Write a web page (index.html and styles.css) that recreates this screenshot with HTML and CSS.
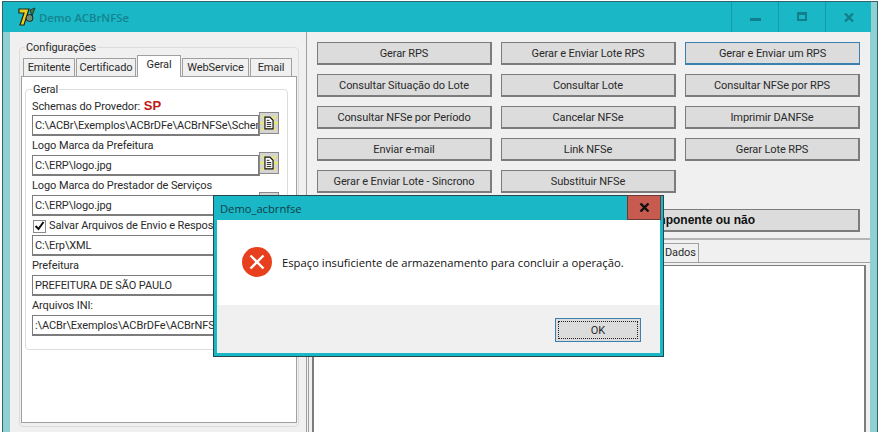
FILE: index.html
```html
<!DOCTYPE html>
<html lang="pt">
<head>
<meta charset="utf-8">
<title>Demo ACBrNFSe</title>
<link rel="stylesheet" href="styles.css">
</head>
<body>
<svg class="defs" width="0" height="0" aria-hidden="true">
  <symbol id="doc" viewBox="0 0 20 22">
    <circle cx="10" cy="11" r="8" fill="#dfe0ac" opacity=".8"/>
    <path d="M2 3l4 3M18 3l-4 3M0 11h4M16 11h4M2 19l4-3M18 19l-4-3" stroke="#f2f04a" stroke-width="1.600"/>
    <path d="M5.500 4.500h5.500l3.500 3.500v9.500h-9z" fill="#fff" stroke="#111" stroke-width="1.300"/>
    <path d="M7.500 8h3M7.500 10.500h5M7.500 12.500h5M7.500 15h5" stroke="#111"/>
  </symbol>
</svg>

<main class="window">
  <header class="titlebar">
    <svg class="logo" width="20" height="20" viewBox="0 0 20 20">
      <path d="M2 2h10l-5 16H3l4-12H2z" fill="#e8d21a" stroke="#222" stroke-width="1.200"/>
      <path d="M13 3l5-2-3 8z" fill="#3e7d3a" stroke="#222" stroke-width=".8"/>
      <circle cx="12.500" cy="11" r="3.500" fill="#6f8f72" stroke="#222"/>
    </svg>
    <span class="title">Demo ACBrNFSe</span>
    <div class="controls">
      <div class="ctl"><span class="min"></span></div>
      <div class="ctl"><span class="max"></span></div>
      <div class="ctl ctl-x">
        <svg width="10" height="9" viewBox="0 0 10 9"><path d="M1 0.500l8 8M9 0.500l-8 8" stroke="#127f8c" stroke-width="2.400"/></svg>
      </div>
    </div>
  </header>

  <div class="client">
    <aside class="left">
      <section class="config">
        <span class="legend">Configurações</span>
        <nav class="tabs">
          <span class="tab t1">Emitente</span>
          <span class="tab t2">Certificado</span>
          <span class="tab active">Geral</span>
          <span class="tab t4">WebService</span>
          <span class="tab t5">Email</span>
        </nav>
        <div class="page">
          <section class="group">
            <span class="legend legend-g">Geral</span>
            <div class="fld"><span class="lbl">Schemas do Provedor: <b class="uf">SP</b></span>
              <div class="line"><span class="inp">C:\ACBr\Exemplos\ACBrDFe\ACBrNFSe\Schemas</span><span class="pick"><svg width="20" height="22"><use href="#doc"/></svg></span></div></div>
            <div class="fld"><span class="lbl">Logo Marca da Prefeitura</span>
              <div class="line"><span class="inp">C:\ERP\logo.jpg</span><span class="pick"><svg width="20" height="22"><use href="#doc"/></svg></span></div></div>
            <div class="fld"><span class="lbl">Logo Marca do Prestador de Serviços</span>
              <div class="line"><span class="inp">C:\ERP\logo.jpg</span><span class="pick"><svg width="20" height="22"><use href="#doc"/></svg></span></div></div>
            <div class="fld"><span class="lbl chk"><span class="box"><svg width="11" height="10" viewBox="0 0 11 10"><path d="M1.500 5l3 3 5-7" fill="none" stroke="#111" stroke-width="2"/></svg></span>Salvar Arquivos de Envio e Resposta</span>
              <div class="line"><span class="inp">C:\Erp\XML</span></div></div>
            <div class="fld"><span class="lbl">Prefeitura</span>
              <div class="line"><span class="inp">PREFEITURA DE SÃO PAULO</span></div></div>
            <div class="fld"><span class="lbl">Arquivos INI:</span>
              <div class="line"><span class="inp">:\ACBr\Exemplos\ACBrDFe\ACBrNFSe\ArqINI</span></div></div>
          </section>
        </div>
      </section>
    </aside>

    <div class="right">
      <section class="actions">
        <div class="grid">
          <button class="btn">Gerar RPS</button>
          <button class="btn">Gerar e Enviar Lote RPS</button>
          <button class="btn btn-focus">Gerar e Enviar um RPS</button>
          <button class="btn">Consultar Situação do Lote</button>
          <button class="btn">Consultar Lote</button>
          <button class="btn">Consultar NFSe por RPS</button>
          <button class="btn">Consultar NFSe por Período</button>
          <button class="btn">Cancelar NFSe</button>
          <button class="btn">Imprimir DANFSe</button>
          <button class="btn">Enviar e-mail</button>
          <button class="btn">Link NFSe</button>
          <button class="btn">Gerar Lote RPS</button>
          <button class="btn">Gerar e Enviar Lote - Sincrono</button>
          <button class="btn">Substituir NFSe</button>
        </div>
        <button class="btn btn-wide">componente ou não</button>
      </section>
      <section class="log">
        <nav class="logtabs"><span class="logtab">Dados</span></nav>
        <div class="logpage"><div class="memo"></div></div>
      </section>
    </div>
  </div>
</main>

<div class="dialog" role="alertdialog">
  <header class="dlg-title">
    <span>Demo_acbrnfse</span>
    <span class="dlg-close"><svg width="11" height="9" viewBox="0 0 11 9"><path d="M1.500 0.500l8 8M9.500 0.500l-8 8" stroke="#111" stroke-width="2.400"/></svg></span>
  </header>
  <div class="dlg-body">
    <svg width="30" height="30" viewBox="0 0 30 30"><circle cx="15" cy="15" r="15" fill="#e8401f"/><path d="M8.500 8.500l13 13M21.500 8.500l-13 13" stroke="#fff" stroke-width="2.400"/></svg>
    <p class="dlg-msg">Espaço insuficiente de armazenamento para concluir a operação.</p>
  </div>
  <footer class="dlg-foot"><button class="ok"><span>OK</span></button></footer>
</div>
</body>
</html>
```

FILE: styles.css
```css
* { box-sizing: border-box; }
html, body { margin: 0; height: 100%; overflow: hidden; }
body { background: #fff; font-family: Roboto, "Liberation Sans", Arial, sans-serif; font-size: 11px; letter-spacing: -.1px; color: #2a2a2a; position: relative; }
.defs { position: absolute; }

.window { position: absolute; left: 2px; top: 1px; width: 876px; height: 431px; background: #8fd0d4; border: 1px solid #35626a; border-bottom: 0; }
.titlebar { height: 30px; margin-right: 6px; background: #1ab8c6; display: flex; align-items: center; padding-left: 14px; }
.logo { flex: none; margin-right: 2px; }
.title { font-family: "Open Sans", sans-serif; font-size: 11.300px; letter-spacing: 0; font-weight: 600; color: #14838f; }
.controls { margin-left: auto; display: flex; height: 100%; }
.ctl { width: 47px; height: 100%; border-left: 1px solid #149aa8; display: flex; align-items: center; justify-content: center; }
.ctl-x { width: 46px; }
.min { width: 11px; height: 3px; background: #127f8c; margin-top: 5px; }
.max { width: 10px; height: 9px; border: 2px solid #127f8c; border-top-width: 3px; margin-top: -1px; }

.client { display: flex; margin: 0 7px; height: 400px; background: #f0f0f0; }
.left { width: 296px; flex: none; padding: 15px 8px 0 9px; }
.config { position: relative; height: 380px; border: 1px solid #dcdcdc; border-radius: 4px; padding: 7px 1px 0 1px; width: 280px; }
.legend { position: absolute; left: 5px; top: -7px; height: 13px; line-height: 13px; padding: 0 1px; background: #f0f0f0; }

.tabs { display: flex; align-items: flex-end; height: 21px; padding-left: 2px; position: relative; z-index: 1; }
.tab { height: 18px; line-height: 18px; text-align: center; background: #f0f0f0; border: 1px solid #a0a0a0; border-bottom: 0; margin-right: 1px; }
.t1 { width: 52px; }
.t2 { width: 60px; }
.t4 { width: 67px; }
.t5 { width: 42px; }
.tab.active { width: 44px; height: 22px; line-height: 18px; margin-bottom: -1px; background: #fff; border-color: #a0a0a0; }

.page { width: 276px; height: 347px; background: #fff; border: 1px solid #a0a0a0; padding: 12px 7px 0 3px; }
.group { position: relative; width: 263px; height: 261px; border: 1px solid #dcdcdc; border-radius: 4px; padding: 6px 0 0 6px; }
.legend-g { background: #fff; top: -7px; left: 6px; }
.fld { height: 40px; }
.lbl { display: block; height: 19px; line-height: 20px; white-space: nowrap; }
.uf { color: #c01818; font-family: "Liberation Sans", Arial, sans-serif; font-size: 13px; margin-left: 1px; letter-spacing: 0; }
.chk { display: flex; align-items: center; }
.box { width: 13px; height: 13px; border: 1px solid #8a8a8a; background: #fff; margin: 1px 3px 0 1px; display: flex; align-items: center; justify-content: center; flex: none; }
.line { position: relative; width: 228px; }
.inp { display: block; width: 228px; height: 21px; line-height: 17px; border: 2px solid #7c7c7c; border-width: 1px 2px 2px 1px; padding: 1px 2px; background: #fff; white-space: nowrap; overflow: hidden; }
.pick { position: absolute; left: 227px; top: -3px; width: 20px; height: 22px; background: #d4d4d4; border: 1px solid #8a8a8a; display: flex; align-items: center; justify-content: center; }

.right { flex: 1; min-width: 0; border-left: 1px solid #a0a0a0; }
.actions { height: 208px; padding: 10px 9px 0 10px; border-bottom: 2px solid #b4b4b4; }
.grid { display: grid; grid-template-columns: repeat(3, 175px); grid-auto-rows: 23px; gap: 9px; }
.btn { height: 23px; padding: 0; background: #dcdcdc; border: 1px solid #7c7c7c; border-width: 1px 2px 2px 1px; font: 11px Roboto, "Liberation Sans", Arial, sans-serif; letter-spacing: -.1px; color: #2a2a2a; }
.btn-focus { border: 1px solid #3c7fb1; border-width: 1px 1px 2px 1px; }
.btn-wide { display: block; width: 543px; margin-top: 16px; text-align: right; padding-right: 103px; font: 700 12px "Liberation Sans", Arial, sans-serif; letter-spacing: 0; color: #111; }

.log { padding-left: 1px; }
.logtabs { height: 22px; display: flex; justify-content: flex-end; align-items: flex-end; padding-right: 171px; }
.logtab { width: 48px; height: 19px; line-height: 18px; padding-left: 13px; border: 1px solid #a0a0a0; border-bottom: 0; }
.logpage { border-top: 1px solid #a0a0a0; border-left: 1px solid #a0a0a0; padding: 2px 4px 0 3px; height: 170px; }
.memo { height: 167px; background: #fff; border: 1px solid #7c7c7c; border-width: 1px 2px 0 2px; }

.dialog { position: absolute; left: 213px; top: 195px; width: 451px; height: 162px; background: #1ab8c6; border: 1px solid #22494f; padding: 0 3px 3px 3px; display: flex; flex-direction: column; }
.dlg-title { height: 24px; flex: none; display: flex; align-items: center; padding-left: 3px; font-family: "Open Sans", sans-serif; font-size: 11.200px; letter-spacing: 0; color: #0f3e48; position: relative; }
.dlg-close { position: absolute; right: -1px; top: -1px; width: 34px; height: 25px; background: #c75b50; border: 1px solid #6b3a36; display: flex; align-items: center; justify-content: center; }
.dlg-body { flex: 1; background: #fff; display: flex; align-items: center; padding-left: 25px; padding-bottom: 1px; }
.dlg-msg { margin: 0 0 0 10px; font-family: "Open Sans", sans-serif; font-size: 11.250px; letter-spacing: 0; color: #111; white-space: nowrap; }
.dlg-foot { height: 48px; flex: none; background: #f0f0f0; display: flex; justify-content: flex-end; align-items: flex-start; padding: 13px 19px 0 0; }
.ok { width: 86px; height: 24px; padding: 2px; background: #dcdcdc; border: 1px solid #3c7fb1; font: 11px Roboto, "Liberation Sans", Arial, sans-serif; color: #2a2a2a; }
.ok span { display: flex; align-items: center; justify-content: center; height: 100%; border: 1px dotted #222; }
```
